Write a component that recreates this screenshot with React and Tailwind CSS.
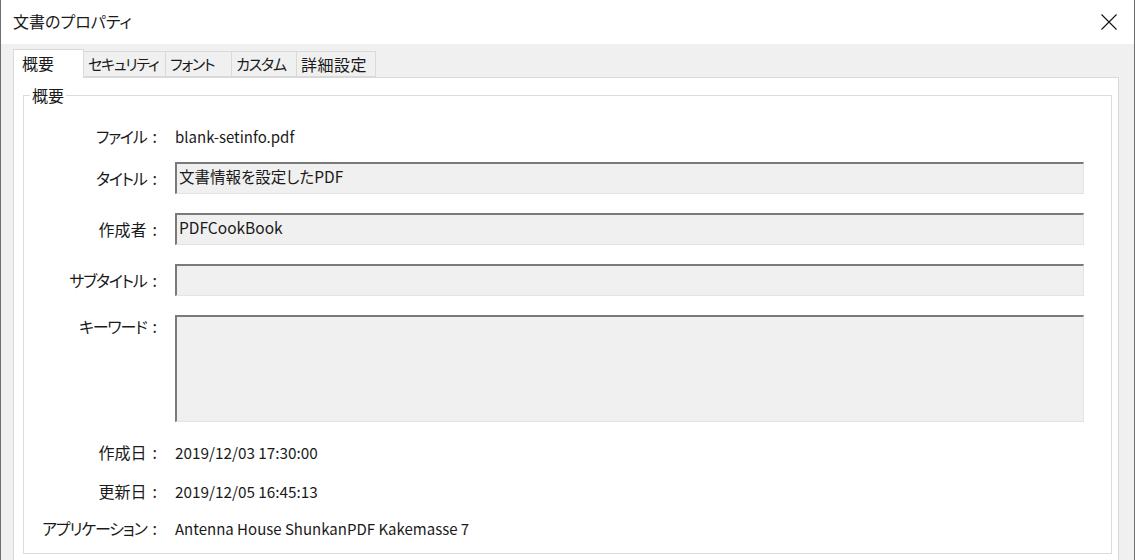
import React from "react";

const font = {
  fontFamily: '"Noto Sans CJK JP", "Noto Sans", sans-serif',
  fontFeatureSettings: '"palt"',
};

const tabs = [
  { t: "概要", w: "w-[71px]" },
  { t: "セキュリティ", w: "w-[82px]", tight: true },
  { t: "フォント", w: "w-[66px]", tight: true },
  { t: "カスタム", w: "w-[65px]", tight: true },
  { t: "詳細設定", w: "w-[79px]" },
];

const Field = ({ value, tall }) => (
  <div
    className={`w-[909px] ${tall ? "h-[107px]" : "h-[32px]"} bg-[#f0f0f0] border-t-2 border-l-2 border-t-[#7a7a7a] border-l-[#7a7a7a] border-r border-b border-r-[#e3e3e3] border-b-[#e3e3e3] px-[2px] pt-[2px] leading-[20px] text-[15.5px]`}
  >
    {value}
  </div>
);

const Row = ({ label, children, className = "", top, tight }) => (
  <div className={`flex ${top ? "items-start" : "items-center"} ${className}`}>
    <div className={`w-[135px] pr-[2px] text-right whitespace-nowrap leading-[20px] ${top ? "pt-[1px]" : ""}`}>
      <span className={tight ? "tracking-[-1.2px]" : ""}>{label}</span>
      <span className="ml-[6px]">:</span>
    </div>
    <div className="ml-[16px]">{children}</div>
  </div>
);

export default function App() {
  return (
    <div
      className="w-[1135px] h-[560px] bg-[#f0f0f0] border-x border-[#6e6e6e] overflow-hidden text-[16px] text-[#1a1a1a]"
      style={font}
    >
      {/* title bar */}
      <div className="h-[44px] bg-white flex items-center justify-between pl-[12px] pr-[17px]">
        <span className="text-[16px] leading-[20px] pb-[2px]">文書のプロパティ</span>
        <svg width="16" height="16" viewBox="0 0 16 16" className="mb-[1px]">
          <path d="M0.5 0.5 L15.5 15.5 M15.5 0.5 L0.5 15.5" stroke="#111" strokeWidth="1.1" />
        </svg>
      </div>

      <div className="pl-[12px] pr-[15px] pt-[5px]">
        {/* tabs */}
        <div className="flex items-end h-[28px]">
          {tabs.map((tab, i) =>
            i === 0 ? (
              <div
                key={tab.t}
                className={`relative z-10 h-[29px] -mb-px bg-white border border-b-0 border-[#d9d9d9] ${tab.w} pl-[8px] leading-[26px]`}
              >
                {tab.t}
              </div>
            ) : (
              <div
                key={tab.t}
                className={`h-[26px] ${tab.w} bg-[#f0f0f0] border border-l-0 border-[#d9d9d9] pl-[4px] leading-[24px] whitespace-nowrap overflow-hidden ${tab.tight ? "text-[15px] tracking-[-1.2px]" : "tracking-[0.5px]"}`}
              >
                {tab.t}
              </div>
            )
          )}
        </div>

        {/* tab page */}
        <div className="bg-white border border-[#d9d9d9] h-[520px] pl-[9px] pr-[6px] pt-[7px]">
          <fieldset className="border border-[#dcdcdc] h-[469px] pt-[15px]">
            <legend className="ml-[6px] px-[2px] leading-[20px]">概要</legend>
            <Row label="ファイル" tight className="h-[31px]">
              <span className="leading-[20px] text-[15px]">blank-setinfo.pdf</span>
            </Row>
            <Row label="タイトル" tight className="mt-[11px]">
              <Field value="文書情報を設定したPDF" />
            </Row>
            <Row label="作成者" className="mt-[19px]">
              <Field value="PDFCookBook" />
            </Row>
            <Row label="サブタイトル" tight className="mt-[19px]">
              <Field value="" />
            </Row>
            <Row label="キーワード" tight className="mt-[19px]" top>
              <Field value="" tall />
            </Row>
            <Row label="作成日" className="mt-[14px] h-[32px]">
              <span className="text-[15.3px]">2019/12/03 17:30:00</span>
            </Row>
            <Row label="更新日" className="mt-[7px] h-[32px]">
              <span className="text-[15.3px]">2019/12/05 16:45:13</span>
            </Row>
            <Row label="アプリケーション" tight className="mt-[5px] h-[32px]">
              <span className="text-[15px]">Antenna House ShunkanPDF Kakemasse 7</span>
            </Row>
          </fieldset>
        </div>
      </div>
    </div>
  );
}
